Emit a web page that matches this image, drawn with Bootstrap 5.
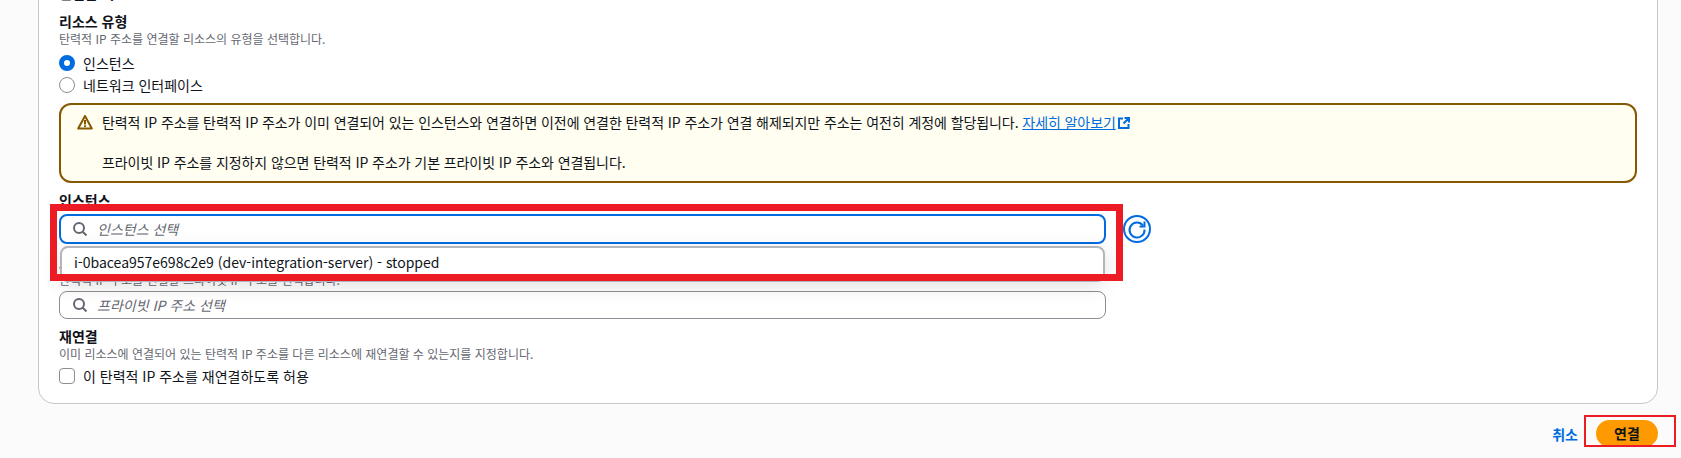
<!DOCTYPE html>
<html lang="ko">
<head>
  <meta charset="utf-8">
  <title>탄력적 IP 주소 연결</title>
  <link href="https://cdn.jsdelivr.net/npm/bootstrap@5.3.0/dist/css/bootstrap.min.css" rel="stylesheet">
  <style>
    html, body { height: 458px; overflow: hidden; }
    body { background: #fbfbfb; color: #0f141a; font-family: "Noto Sans CJK KR", "Liberation Sans", sans-serif; font-size: 14px; line-height: 20px; }
    .page-wrap { display: flow-root; position: relative; height: 458px; padding: 0 23px 0 38px; }
    .panel { margin-top: -20px; height: 424px; background: #fff; border: 1px solid #c6c6cd; border-radius: 16px; padding: 0 20px; }
    .cut-title { height: 30px; padding-top: 2px; font-weight: 700; }
    .fld-label { font-weight: 700; line-height: 20px; }
    .fld-desc { font-size: 12px; line-height: 16px; color: #656871; }
    .opt-row { height: 22px; gap: 8px; }
    .opt-row .form-check-input { width: 16px; height: 16px; margin: 0; flex: none; border: 1px solid #8c8c94; background-color: #fff; }
    .opt-row .form-check-input:checked { border: 5px solid #006ce0; background: #fff; background-image: none; }
    .opt-row .form-check-input[type=checkbox] { border-radius: 4px; }
    .radio-first { margin-top: 5px; }
    .warn-box { height: 80px; margin-top: 7px; background: #fffef0; border: 2px solid #855900; border-radius: 12px; padding: 7px 16px 0; gap: 9px; }
    .warn-box svg { margin-top: 2px; flex: none; }
    .warn-box p { margin: 0; line-height: 20px; letter-spacing: -.08px; }
    .warn-box p + p { margin-top: 20px; }
    .warn-box a { color: #006ce0; }
    .warn-box .ext-icon { margin: 0 0 0 2px; vertical-align: -1px; }
    .inst-label { margin-top: 7px; }
    .select-box { width: 1047px; height: 28px; border: 1px solid #8c8c94; border-radius: 8px; padding: 0 12px; gap: 9px; background: #fff; }
    .select-box.is-open { height: 30px; border: 2px solid #006ce0; padding: 0 11px; }
    .select-box i { color: #656871; }
    .open-row { gap: 17px; margin-top: 4px; }
    .private-desc-box { margin-top: 3px; }
    .gap-7 { margin-top: 7px; }
    .check-gap { margin-top: 3px; }
    .opts-menu { position: absolute; left: 60px; top: 246px; width: 1045px; height: 36px; background: #fff; border: 2px solid #b4b4bb; border-radius: 8px; padding: 4px 12px; box-shadow: 0 4px 20px rgba(0, 7, 22, .12); z-index: 2; }
    .red-frame { position: absolute; border: 7px solid #ed1c24; z-index: 3; pointer-events: none; }
    .red-main { left: 50px; top: 204px; width: 1073px; height: 77px; }
    .red-btn { left: 1584px; top: 415px; width: 92px; height: 32px; border-width: 2px; }
    .foot-row { margin-top: 16px; gap: 18px; }
    .cancel-link { color: #006ce0; font-weight: 700; text-decoration: none; }
    .go-btn { width: 62px; height: 27px; padding: 0; background: #ff9900; border: 0; border-radius: 14px; font-weight: 700; font-size: 14px; line-height: 27px; color: #0f141a; }
  </style>
</head>
<body>
  <div class="page-wrap">
    <div class="panel">
      <div class="cut-title">연결할 리소스</div>

      <div class="fld-label">리소스 유형</div>
      <div class="fld-desc">탄력적 IP 주소를 연결할 리소스의 유형을 선택합니다.</div>
      <div class="d-flex align-items-center opt-row radio-first">
        <input class="form-check-input" type="radio" name="rtype" checked>
        <span>인스턴스</span>
      </div>
      <div class="d-flex align-items-center opt-row">
        <input class="form-check-input" type="radio" name="rtype">
        <span>네트워크 인터페이스</span>
      </div>

      <div class="d-flex warn-box">
        <svg width="16" height="16" viewBox="0 0 16 16" fill="none" stroke="#855900" stroke-width="2" stroke-linejoin="round">
          <path d="M8 2 1.2 14.5h13.6z"/>
          <path d="M8 6v4.5M8 11.3v1.7"/>
        </svg>
        <div>
          <p>탄력적 IP 주소를 탄력적 IP 주소가 이미 연결되어 있는 인스턴스와 연결하면 이전에 연결한 탄력적 IP 주소가 연결 해제되지만 주소는 여전히 계정에 할당됩니다. <a href="#">자세히 알아보기</a><svg class="ext-icon" width="12" height="12" viewBox="0 0 12 12" fill="none" stroke="#006ce0" stroke-width="2"><path d="M5 1.5H1v9.5h9.5V7M6.5 1h4.5v4.5M11 1 5.5 6.5"/></svg></p>
          <p>프라이빗 IP 주소를 지정하지 않으면 탄력적 IP 주소가 기본 프라이빗 IP 주소와 연결됩니다.</p>
        </div>
      </div>

      <div class="fld-label inst-label">인스턴스</div>
      <div class="d-flex align-items-center open-row">
        <div class="d-flex align-items-center select-box is-open">
          <svg width="16" height="16" viewBox="0 0 16 16" fill="none" stroke="#656871" stroke-width="2"><circle cx="7" cy="7" r="5"/><path d="m10.5 10.5 4 4"/></svg>
          <i>인스턴스 선택</i>
        </div>
        <svg width="28" height="28" viewBox="0 0 28 28" fill="none" stroke="#006ce0" stroke-width="2"><circle cx="14" cy="14" r="13"/><path d="M20 10.5a7.5 7.5 0 1 0 1.5 4"/><path d="M21.5 6.5v5h-5"/></svg>
      </div>

      <div class="fld-label mt-2">프라이빗 IP 주소</div>
      <div class="fld-desc">탄력적 IP 주소를 연결할 프라이빗 IP 주소를 선택합니다.</div>
      <div class="d-flex align-items-center select-box private-desc-box">
        <svg width="16" height="16" viewBox="0 0 16 16" fill="none" stroke="#656871" stroke-width="2"><circle cx="7" cy="7" r="5"/><path d="m10.5 10.5 4 4"/></svg>
        <i>프라이빗 IP 주소 선택</i>
      </div>

      <div class="fld-label gap-7">재연결</div>
      <div class="fld-desc">이미 리소스에 연결되어 있는 탄력적 IP 주소를 다른 리소스에 재연결할 수 있는지를 지정합니다.</div>
      <div class="d-flex align-items-center opt-row check-gap">
        <input class="form-check-input" type="checkbox">
        <span>이 탄력적 IP 주소를 재연결하도록 허용</span>
      </div>
    </div>

    <div class="d-flex justify-content-end align-items-center foot-row">
      <a class="cancel-link" href="#">취소</a>
      <button class="go-btn" type="button">연결</button>
    </div>

    <div class="opts-menu">i-0bacea957e698c2e9 (dev-integration-server) - stopped</div>
    <div class="red-frame red-main"></div>
    <div class="red-frame red-btn"></div>
  </div>
</body>
</html>
